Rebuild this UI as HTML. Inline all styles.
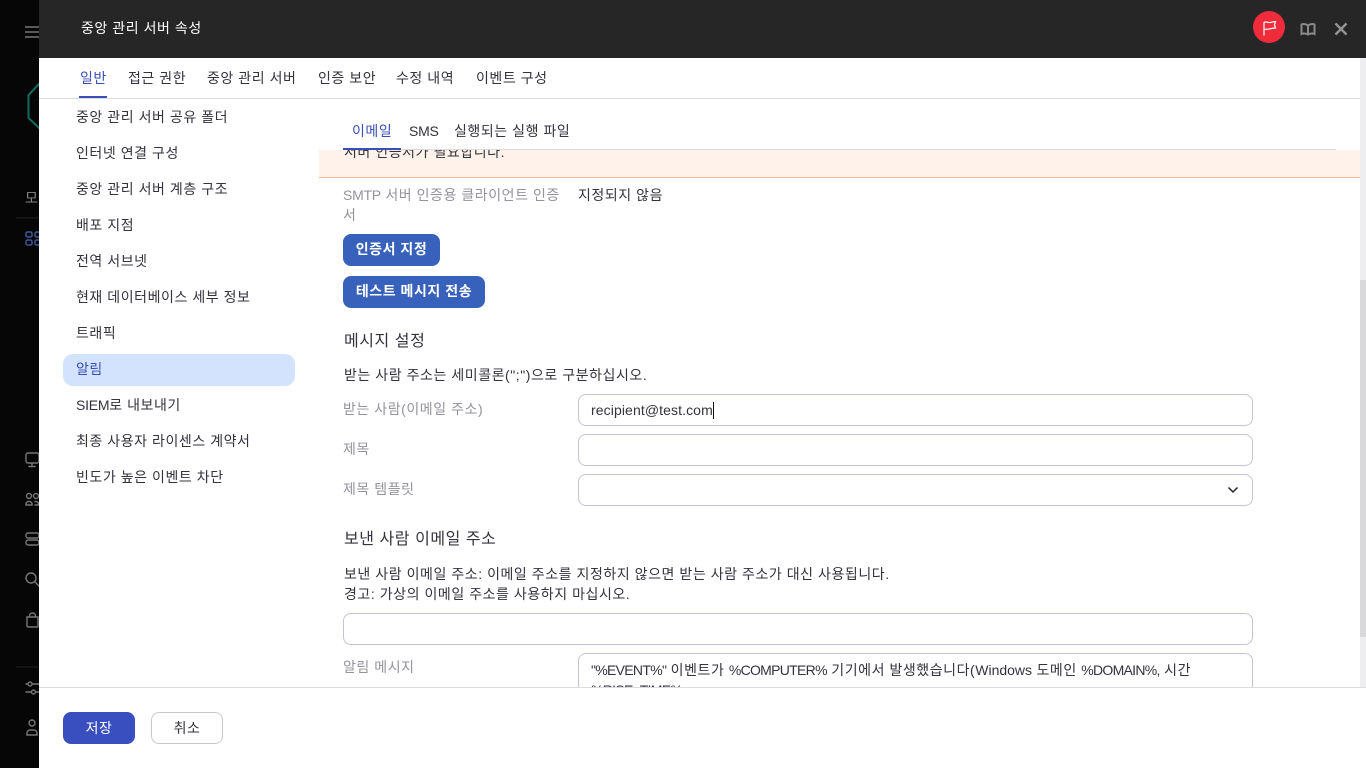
<!DOCTYPE html>
<html lang="ko"><head><meta charset="utf-8"><style>
html,body{margin:0;padding:0;width:1366px;height:768px;overflow:hidden;background:#060606}
*{box-sizing:border-box}
body{font-family:"Liberation Sans","Noto Sans CJK KR",sans-serif;font-size:14px;color:#33333b;letter-spacing:.55px}
.a{position:absolute;white-space:nowrap;line-height:20px}
.lbl{color:#93939b}
.h{font-size:16px}
.u{letter-spacing:-.7px}
.l{letter-spacing:0}
.s{letter-spacing:-.25px}
.in{position:absolute;background:#fff;border:1px solid #c4c2d4;border-radius:8px;height:32px}
.btn{position:absolute;background:#3761bb;color:#fff;border-radius:8px;height:32px;line-height:31px;text-align:center;font-weight:700;font-size:14px}
svg{position:absolute;overflow:visible}
</style></head><body>
<svg style="left:25px;top:26px" width="14" height="12" fill="none" stroke="#777" stroke-width="1.6"><path d="M0 1h14M0 6h14M0 11h14"/></svg>
<svg style="left:0;top:0" width="39" height="768" fill="none" stroke-linecap="round">
<path d="M39 84 L28.500 95 V118 L39 128" stroke="#136a5b" stroke-width="2"/>
<text x="25" y="203" font-size="14" fill="#888" stroke="none">모</text>
<path d="M16 218H39" stroke="#222"/><path d="M16 667H39" stroke="#222"/>
<g stroke="#3f5a99" stroke-width="1.4"><rect x="26" y="232" width="6" height="5" rx="1.500"/><rect x="26" y="240" width="6" height="5" rx="1.500"/><rect x="35" y="232" width="6" height="5" rx="1.500"/><rect x="35" y="240" width="6" height="5" rx="1.500"/></g>
<g stroke="#777" stroke-width="1.4"><rect x="26" y="453" width="13" height="10" rx="2"/><path d="M32 463v3M29 466.500h6"/>
<circle cx="29" cy="496" r="2.500"/><circle cx="36" cy="496" r="2.500"/><path d="M26 505v-1a2.500 2.500 0 0 1 2.500-2.500h1a2.500 2.500 0 0 1 2.500 2.500v1zM35 501.500h1a2.500 2.500 0 0 1 2.500 2.500v1H35"/>
<rect x="26" y="533" width="13" height="5" rx="2"/><rect x="26" y="540" width="13" height="5" rx="2"/>
<circle cx="31" cy="578" r="5"/><path d="M35 582l4 4"/>
<path d="M27 617h11v9a1 1 0 0 1-1 1h-9a1 1 0 0 1-1-1zM29.500 617v-1a3 3 0 0 1 6 0v1"/>
<path d="M26 684h14M26 692h14"/><circle cx="30" cy="684" r="2" fill="#060606"/><circle cx="33.500" cy="692" r="2" fill="#060606"/>
<circle cx="32" cy="723" r="3"/><path d="M27 735v-2a3 3 0 0 1 3-3h4a3 3 0 0 1 3 3v2z"/></g>
</svg>

<div style="position:absolute;left:39px;top:0;width:1327px;height:768px;background:#fff">
<div style="position:absolute;left:0;top:0;width:1327px;height:58px;background:#262626"></div>
</div>
<div class="a" style="left:81px;top:18px;color:#fff;font-size:14px">중앙 관리 서버 속성</div>
<svg style="left:1253px;top:11px" width="32" height="32"><circle cx="16" cy="16" r="16" fill="#ef2b3c"/><path d="M11 24.500V11.500c2.500-1.500 4.500.5 6.500 0s3-.8 5-1l-1 3.500 1 3c-2.500 0-4 .2-5.500.8s-4 .2-6 .7" fill="none" stroke="#fff" stroke-width="1.2"/></svg>
<svg style="left:1300px;top:23px" width="16" height="12" fill="none" stroke="#8a8a8a" stroke-width="2"><path d="M8 2.500C6 .8 3 .8 1.500 1.500V11C3 10.300 6 10.300 8 11.500 10 10.300 13 10.300 14.500 11V1.500C13 .8 10 .8 8 2.500ZM8 2.500V11.500"/></svg>
<svg style="left:1335px;top:23px" width="12" height="12" fill="none" stroke="#949494" stroke-width="2.400"><path d="M.5.5l11 11M11.500.5l-11 11"/></svg>

<div class="a" style="left:80px;top:68px;color:#3a4fb8">일반</div>
<div style="position:absolute;left:79px;top:96px;width:28px;height:2px;background:#3a4fb8"></div>
<div class="a" style="left:128px;top:68px">접근 권한</div>
<div class="a" style="left:207px;top:68px">중앙 관리 서버</div>
<div class="a" style="left:318px;top:68px">인증 보안</div>
<div class="a" style="left:396px;top:68px">수정 내역</div>
<div class="a" style="left:476px;top:68px">이벤트 구성</div>
<div style="position:absolute;left:39px;top:98px;width:1321px;height:1px;background:#dcdcdf"></div>

<div style="position:absolute;left:63px;top:354px;width:232px;height:32px;background:#d3e2fd;border-radius:10px"></div>
<div class="a" style="left:76px;top:107px">중앙 관리 서버 공유 폴더</div>
<div class="a" style="left:76px;top:143px">인터넷 연결 구성</div>
<div class="a" style="left:76px;top:179px">중앙 관리 서버 계층 구조</div>
<div class="a" style="left:76px;top:215px">배포 지점</div>
<div class="a" style="left:76px;top:251px">전역 서브넷</div>
<div class="a" style="left:76px;top:287px">현재 데이터베이스 세부 정보</div>
<div class="a" style="left:76px;top:323px">트래픽</div>
<div class="a" style="left:76px;top:359px;color:#3a4fb8">알림</div>
<div class="a" style="left:76px;top:395px"><span class="s">SIEM</span>로 내보내기</div>
<div class="a" style="left:76px;top:431px">최종 사용자 라이센스 계약서</div>
<div class="a" style="left:76px;top:467px">빈도가 높은 이벤트 차단</div>

<div style="position:absolute;left:319px;top:150px;width:1041px;height:28px;background:#fff2ea;border-bottom:1px solid #f6b896;overflow:hidden">
<div class="a" style="left:25px;top:-8px">서버 인증서가 필요합니다.</div></div>
<div style="position:absolute;left:343px;top:149px;width:993px;height:1px;background:#dcdcdf"></div>
<div class="a" style="left:352px;top:121px;color:#3a4fb8">이메일</div>
<div style="position:absolute;left:343px;top:148px;width:58px;height:2px;background:#3a4fb8"></div>
<div class="a s" style="left:409px;top:121px">SMS</div>
<div class="a" style="left:454px;top:121px">실행되는 실행 파일</div>

<div class="a lbl" style="left:343px;top:185px"><span class="s">SMTP</span> 서버 인증용 클라이언트 인증</div>
<div class="a lbl" style="left:343px;top:205px">서</div>
<div class="a" style="left:578px;top:185px">지정되지 않음</div>
<div class="btn" style="left:343px;top:234px;width:97px">인증서 지정</div>
<div class="btn" style="left:343px;top:276px;width:142px">테스트 메시지 전송</div>

<div class="a h" style="left:344px;top:332px">메시지 설정</div>
<div class="a" style="left:344px;top:365px">받는 사람 주소는 세미콜론(";")으로 구분하십시오.</div>
<div class="a lbl" style="left:343px;top:399px">받는 사람(이메일 주소)</div>
<div class="in" style="left:578px;top:394px;width:675px"></div>
<div class="a" style="left:591px;top:400px;letter-spacing:.1px">recipient@test.com</div>
<div style="position:absolute;left:713px;top:402px;width:1px;height:17px;background:#111"></div>
<div class="a lbl" style="left:343px;top:439px">제목</div>
<div class="in" style="left:578px;top:434px;width:675px"></div>
<div class="a lbl" style="left:343px;top:479px">제목 템플릿</div>
<div class="in" style="left:578px;top:474px;width:675px"></div>
<svg style="left:1228px;top:487px" width="10" height="6" fill="none" stroke="#222" stroke-width="1.5"><path d="M.5.5L5 5 9.500.5"/></svg>

<div class="a h" style="left:344px;top:530px">보낸 사람 이메일 주소</div>
<div class="a" style="left:344px;top:564px">보낸 사람 이메일 주소: 이메일 주소를 지정하지 않으면 받는 사람 주소가 대신 사용됩니다.</div>
<div class="a" style="left:344px;top:584px">경고: 가상의 이메일 주소를 사용하지 마십시오.</div>
<div class="in" style="left:343px;top:613px;width:910px"></div>
<div class="a lbl" style="left:343px;top:657px">알림 메시지</div>
<div class="in" style="left:578px;top:653px;width:675px;height:60px"></div>
<div class="a" style="left:591px;top:660px"><span class="u">"%EVENT%"</span> 이벤트가 <span class="u">%COMPUTER%</span> 기기에서 발생했습니다(<span class="l">Windows</span> 도메인 <span class="u">%DOMAIN%,</span> 시간</div>
<div class="a u" style="left:591px;top:680px">%RISE_TIME%</div>

<div style="position:absolute;left:1360px;top:58px;width:6px;height:630px;background:#eeeef0"></div>
<div style="position:absolute;left:1360px;top:280px;width:6px;height:357px;background:#d9d9db"></div>

<div style="position:absolute;left:39px;top:687px;width:1327px;height:81px;background:#fff;border-top:1px solid #dcdcdf"></div>
<div style="position:absolute;left:63px;top:712px;width:72px;height:32px;background:#3a4fbf;border-radius:8px;color:#fff;text-align:center;line-height:32px">저장</div>
<div style="position:absolute;left:151px;top:712px;width:72px;height:32px;background:#fff;border:1px solid #c9c9cd;border-radius:8px;text-align:center;line-height:30px">취소</div>
</body></html>
